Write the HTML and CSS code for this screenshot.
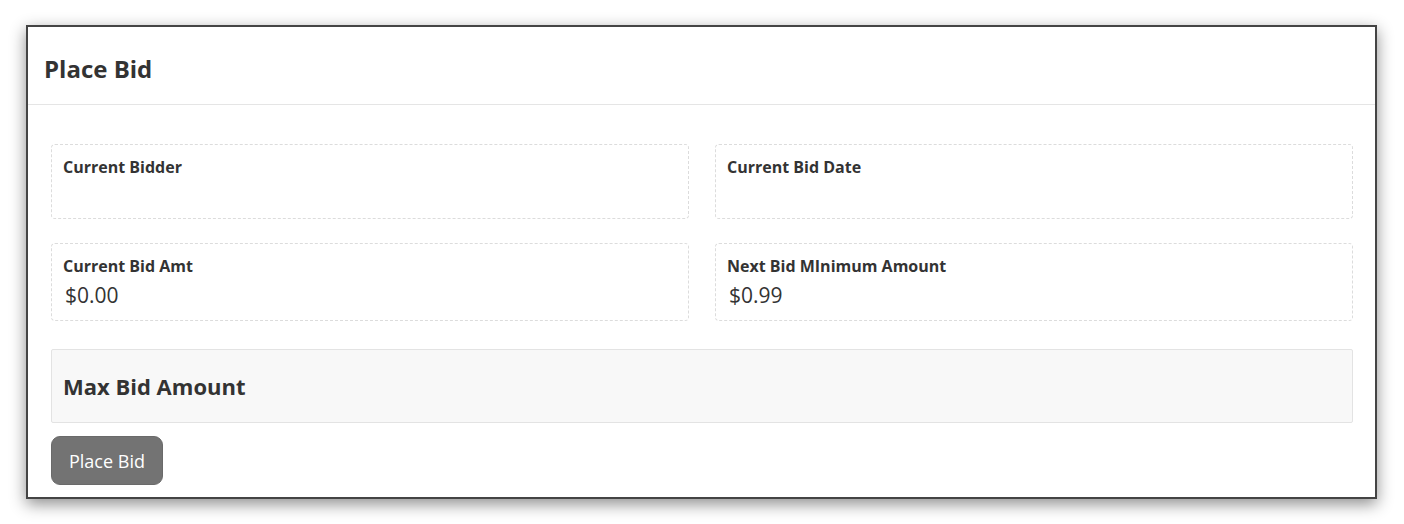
FILE: index.html
```html
<!DOCTYPE html>
<html lang="en">
<head>
    <meta charset="UTF-8">
    <meta name="viewport" content="width=device-width, initial-scale=1.0">
    <title>Place Bid</title>
    <link rel="stylesheet" href="styles.css">
</head>
<body>
    <div class="bid-modal">
        <div class="bid-header">
            <h4>Place Bid</h4>
        </div>

        <div class="bid-body">
            <div class="bid-grid">
                <div class="bid-field">
                    <div class="field-label">Current Bidder</div>
                    <div class="field-value"></div>
                </div>
                <div class="bid-field">
                    <div class="field-label">Current Bid Date</div>
                    <div class="field-value"></div>
                </div>
                <div class="bid-field">
                    <div class="field-label">Current Bid Amt</div>
                    <div class="field-value">$0.00</div>
                </div>
                <div class="bid-field">
                    <div class="field-label">Next Bid MInimum Amount</div>
                    <div class="field-value">$0.99</div>
                </div>
            </div>

            <div class="max-bid">
                <h3>Max Bid Amount</h3>
            </div>

            <button class="bid-button">Place Bid</button>
        </div>
    </div>
</body>
</html>
```

FILE: styles.css
```css
* {
    margin: 0;
    padding: 0;
    box-sizing: border-box;
}

body {
    font-family: "Open Sans", Arial, sans-serif;
    background-color: #fff;
    color: #333;
    padding: 25px 27px 27px 26px;
    min-height: 524px;
}

.bid-modal {
    background-color: #fff;
    border: 2px solid #444;
    box-shadow: 0 5px 15px rgba(0, 0, 0, 0.45);
}

.bid-header {
    padding: 26px 16px 19px;
    border-bottom: 1px solid #e5e5e5;
}

.bid-header h4 {
    font-size: 24px;
    line-height: 32px;
    font-weight: bold;
}

.bid-body {
    padding: 39px 22px 12px 23px;
}

.bid-grid {
    display: grid;
    grid-template-columns: 1fr 1fr;
    column-gap: 26px;
    row-gap: 24px;
    margin-bottom: 28px;
}

.bid-field {
    border: 1px dashed #dcdcdc;
    border-radius: 4px;
    padding: 11px 11px 11px;
}

.field-label {
    font-size: 16px;
    font-weight: bold;
    line-height: 22px;
}

.field-value {
    font-size: 21px;
    line-height: 28px;
    padding-top: 4px;
    min-height: 29px;
    padding-left: 2px;
}

.max-bid {
    background-color: #f8f8f8;
    border: 1px solid #e3e3e3;
    border-radius: 2px;
    padding: 21px 11px 21px;
    margin-bottom: 13px;
}

.max-bid h3 {
    font-size: 22px;
    line-height: 30px;
    font-weight: bold;
}

.bid-button {
    font-family: inherit;
    font-size: 18px;
    color: #fff;
    background-color: #737373;
    border: 1px solid #6a6a6a;
    border-radius: 9px;
    padding: 12px 17px 11px;
    line-height: 24px;
    cursor: pointer;
}
```
